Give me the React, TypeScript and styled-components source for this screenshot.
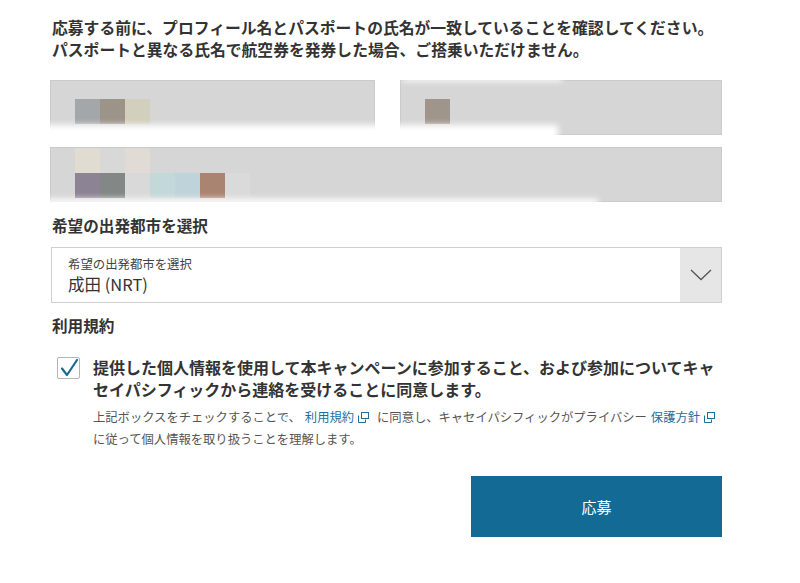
import React from "react";
import styled, { createGlobalStyle } from "styled-components";

const Global = createGlobalStyle`
  html, body { margin: 0; padding: 0; background: #fff; }
  body { font-family: "Noto Sans CJK JP", "Noto Sans", sans-serif; color: #333; }
`;

const Page = styled.div`
  width: 672px;
  padding: 17px 0 40px 50px;
  display: flex;
  flex-direction: column;
`;

const Notice = styled.p`
  margin: 0 0 19px 2px;
  font-size: 15.8px;
  line-height: 22px;
  font-weight: 700;
  color: #333;
`;

const Fields = styled.div`
  position: relative;
  display: flex;
  flex-direction: column;
  gap: 12px;
`;

const FieldRow = styled.div`
  display: flex;
  gap: 25px;
`;

const Field = styled.div<{ $w?: number; $pb?: number }>`
  position: relative;
  box-sizing: border-box;
  height: 55px;
  flex: ${(p) => (p.$w ? `0 0 ${p.$w}px` : "1 1 auto")};
  background: #d6d6d6;
  border: 1px solid #cbcbcb;
  display: flex;
  flex-direction: column;
  justify-content: flex-end;
  padding: 0 0 ${(p) => p.$pb ?? 10}px 24px;
`;

const PixelLine = styled.div`
  display: flex;
`;

const Pixel = styled.span<{ $c: string }>`
  width: 25px;
  height: 25px;
  background: ${(p) => p.$c};
`;

const Smudge = styled.div<{ $top: number; $left: number; $w: number; $h: number }>`
  position: absolute;
  top: ${(p) => p.$top}px;
  left: ${(p) => p.$left}px;
  width: ${(p) => p.$w}px;
  height: ${(p) => p.$h}px;
  background: #fff;
  filter: blur(3px);
`;

const SectionLabel = styled.div<{ $mt: number }>`
  margin: ${(p) => p.$mt}px 0 11px 2px;
  font-size: 15.6px;
  line-height: 22px;
  font-weight: 700;
  color: #333;
`;

const Select = styled.div`
  box-sizing: border-box;
  height: 56px;
  margin-left: 1px;
  border: 1px solid #cfcfcf;
  display: flex;
  background: #fff;
`;

const SelectBody = styled.div`
  flex: 1;
  padding: 8px 16px 0;
  display: flex;
  flex-direction: column;
`;

const SelectCaption = styled.span`
  font-size: 12.4px;
  line-height: 16px;
  color: #444;
`;

const SelectValue = styled.span`
  font-size: 16.5px;
  line-height: 24px;
  color: #333;
`;

const SelectArrow = styled.div`
  width: 41px;
  background: #e6e6e6;
  display: flex;
  align-items: center;
  justify-content: center;
`;

const ConsentRow = styled.div`
  margin-top: 9px;
  display: flex;
  gap: 13px;
  align-items: flex-start;
`;

const CheckBox = styled.div`
  box-sizing: border-box;
  flex: 0 0 23px;
  height: 22px;
  margin: 1px 0 0 7px;
  border: 1px solid #b5b5b5;
  border-radius: 2px;
  background: #fff;
  display: flex;
  align-items: center;
  justify-content: center;
`;

const ConsentBody = styled.div`
  display: flex;
  flex-direction: column;
  gap: 7px;
`;

const ConsentText = styled.div`
  font-size: 16px;
  line-height: 22px;
  font-weight: 700;
  color: #333;
`;

const FinePrint = styled.div`
  font-size: 12.3px;
  line-height: 21px;
  color: #555;
`;

const FineLine = styled.span`
  display: block;
  white-space: nowrap;
`;

const Link = styled.a`
  color: #1f6e9c;
  text-decoration: none;
  margin: 0 8px 0 4px;
`;

const IconWrap = styled.span`
  display: inline-block;
  margin-left: 4px;
  vertical-align: -1px;
`;

const Actions = styled.div`
  margin-top: 26px;
  display: flex;
  justify-content: flex-end;
`;

const Submit = styled.button`
  width: 251px;
  height: 61px;
  border: none;
  background: #136b95;
  color: #fff;
  font-family: inherit;
  font-size: 15px;
  font-weight: 400;
  cursor: pointer;
`;

const ExtIcon = () => (
  <IconWrap>
    <svg width="11" height="11" viewBox="0 0 11 11" fill="none" stroke="#1f6e9c" strokeWidth="1">
      <path d="M0.5 3.5 V10.5 H7.5 V7.5" />
      <rect x="3.5" y="0.5" width="7" height="6" />
    </svg>
  </IconWrap>
);

const Chevron = () => (
  <svg width="22" height="12" viewBox="0 0 22 12" fill="none" stroke="#555" strokeWidth="1.3">
    <path d="M1 1 L11 10.5 L21 1" />
  </svg>
);

const Check = () => (
  <svg width="20" height="20" viewBox="0 0 20 20" fill="none" stroke="#1a6a96" strokeWidth="2.2" strokeLinecap="round" strokeLinejoin="round">
    <path d="M3 10.5 L8 17 L18 2" />
  </svg>
);

const row1a = ["#a3a7aa", "#9c9389", "#d3cfbd"];
const row1b = ["#a0958b"];
const row2top = ["#e0dcd2", "#d8d8d8", "#e0dbd5"];
const row2bottom = ["#8c8494", "#838886", "#d9d9d9", "#c3d8d8", "#bfd3da", "#a98470", "#dadada"];

export default function App() {
  return (
    <>
      <Global />
      <Page>
        <Notice>
          応募する前に、プロフィール名とパスポートの氏名が一致していることを確認してください。
          <br />
          パスポートと異なる氏名で航空券を発券した場合、ご搭乗いただけません。
        </Notice>

        <Fields>
          <FieldRow>
            <Field $w={325}>
              <PixelLine>
                {row1a.map((c, i) => (
                  <Pixel key={i} $c={c} />
                ))}
              </PixelLine>
            </Field>
            <Field>
              <PixelLine>
                {row1b.map((c, i) => (
                  <Pixel key={i} $c={c} />
                ))}
              </PixelLine>
            </Field>
          </FieldRow>
          <FieldRow>
            <Field $pb={3}>
              <PixelLine>
                {row2top.map((c, i) => (
                  <Pixel key={i} $c={c} />
                ))}
              </PixelLine>
              <PixelLine>
                {row2bottom.map((c, i) => (
                  <Pixel key={i} $c={c} />
                ))}
              </PixelLine>
            </Field>
          </FieldRow>
          <Smudge $top={45} $left={-12} $w={520} $h={16} />
          <Smudge $top={-6} $left={352} $w={160} $h={7} />
          <Smudge $top={119} $left={-12} $w={560} $h={8} />
        </Fields>

        <SectionLabel $mt={12}>希望の出発都市を選択</SectionLabel>
        <Select>
          <SelectBody>
            <SelectCaption>希望の出発都市を選択</SelectCaption>
            <SelectValue>成田 (NRT)</SelectValue>
          </SelectBody>
          <SelectArrow>
            <Chevron />
          </SelectArrow>
        </Select>

        <SectionLabel $mt={11}>利用規約</SectionLabel>
        <ConsentRow>
          <CheckBox>
            <Check />
          </CheckBox>
          <ConsentBody>
            <ConsentText>
              提供した個人情報を使用して本キャンペーンに参加すること、および参加についてキャセイパシフィックから連絡を受けることに同意します。
            </ConsentText>
            <FinePrint>
              <FineLine>
                上記ボックスをチェックすることで、
                <Link href="#">
                  利用規約
                  <ExtIcon />
                </Link>
                に同意し、キャセイパシフィックがプライバシー
                <Link href="#">
                  保護方針
                  <ExtIcon />
                </Link>
              </FineLine>
              <FineLine>に従って個人情報を取り扱うことを理解します。</FineLine>
            </FinePrint>
          </ConsentBody>
        </ConsentRow>

        <Actions>
          <Submit>応募</Submit>
        </Actions>
      </Page>
    </>
  );
}
